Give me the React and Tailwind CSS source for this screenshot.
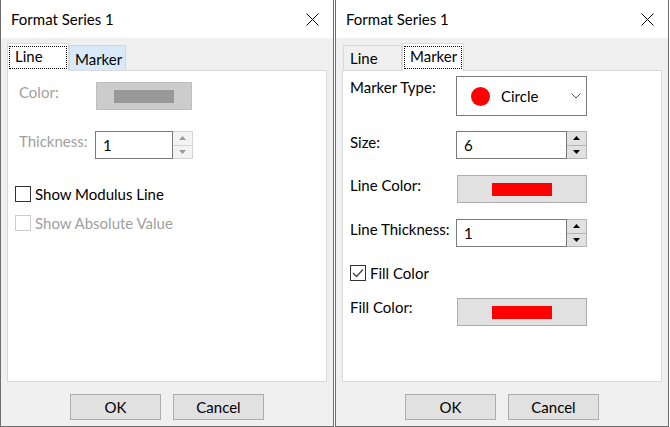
import React from 'react';

function CloseX() {
  return (
    <svg width="13" height="13" viewBox="0 0 13 13" className="block">
      <path d="M0.5 0.5 L12.5 12.5 M12.5 0.5 L0.5 12.5" stroke="#000" strokeWidth="1" fill="none" />
    </svg>
  );
}

function Arrow({ up, color }) {
  return (
    <svg width="7" height="4" viewBox="0 0 7 4" className="block">
      <polygon points={up ? '3.5,0 7,4 0,4' : '0,0 7,0 3.5,4'} fill={color} />
    </svg>
  );
}

function SpinBox({ value, width, dim }) {
  const arrow = dim ? '#9a9a9a' : '#000';
  return (
    <div className="flex h-[28px]" style={{ width }}>
      <div className="flex-1 border border-[#7a7a7a] bg-white pl-[7px] pt-[3px] leading-[20px] text-black">{value}</div>
      <div className={`w-[20px] flex flex-col border border-l-0 ${dim ? 'border-[#d4d4d4] bg-[#f3f3f3]' : 'border-[#b4b4b4] bg-[#e1e1e1]'}`}>
        <div className={`flex-1 flex items-center justify-center border-b ${dim ? 'border-[#d4d4d4]' : 'border-[#b4b4b4]'}`}>
          <Arrow up color={arrow} />
        </div>
        <div className="flex-1 flex items-center justify-center">
          <Arrow color={arrow} />
        </div>
      </div>
    </div>
  );
}

function ColorButton({ swatch, dim, className }) {
  return (
    <div className={`h-[28px] border flex items-center justify-center ${dim ? 'bg-[#cccccc] border-[#bfbfbf]' : 'bg-[#e1e1e1] border-[#adadad]'} ${className}`}>
      <div className="w-[60px] h-[13px]" style={{ background: swatch }} />
    </div>
  );
}

function CheckBox({ checked, dim, label }) {
  return (
    <div className="flex items-start h-[20px]">
      <div className={`mt-[2px] w-[16px] h-[16px] border bg-white flex items-center justify-center ${dim ? 'border-[#cccccc]' : 'border-[#333333]'}`}>
        {checked && (
          <svg width="12" height="10" viewBox="0 0 12 10" className="block">
            <path d="M1 5 L4.5 8.5 L11 1.5" stroke="#404040" strokeWidth="1.3" fill="none" />
          </svg>
        )}
      </div>
      <span className={`ml-[4px] ${dim ? 'text-[#a0a0a0]' : 'text-black'}`}>{label}</span>
    </div>
  );
}

function Tab({ label, selected, width }) {
  if (selected) {
    return (
      <div className="relative z-10 -mb-px h-[28px] bg-white border-x border-t border-[#d9d9d9] pt-[2px] px-[1px] pb-[1px]" style={{ width }}>
        <div className="h-[23px] border border-dotted border-black pl-[5px] leading-[19px] text-black">{label}</div>
      </div>
    );
  }
  return (
    <div className="h-[25px] bg-[#f0f0f0] border-x border-t border-[#d9d9d9] pl-[6px] pt-[2px] leading-[20px] text-black" style={{ width }}>
      {label}
    </div>
  );
}

function Dialog({ tabs, children }) {
  return (
    <div className="w-[334px] h-[427px] flex flex-col border-x border-b border-[#6e6e6e] bg-[#f0f0f0]">
      <div className="h-[38px] bg-white flex items-center justify-between pl-[10px] pr-[14px]">
        <span className="text-[15px] text-black leading-[20px]">Format Series 1</span>
        <CloseX />
      </div>
      <div className="flex flex-col px-[6px]">
        <div className="h-[32px] flex items-end">{tabs}</div>
        <div className="h-[312px] bg-white border border-[#d9d9d9]">{children}</div>
      </div>
      <div className="mt-[12px] flex justify-center gap-[12px]">
        <div className="w-[91px] h-[26px] border border-[#adadad] bg-[#e1e1e1] flex items-center justify-center text-black">OK</div>
        <div className="w-[91px] h-[26px] border border-[#adadad] bg-[#e1e1e1] flex items-center justify-center text-black">Cancel</div>
      </div>
    </div>
  );
}

export default function App() {
  return (
    <div className="w-[670px] h-[427px] bg-white flex gap-px font-['Lato',sans-serif] text-[15px] leading-[20px]">
      <Dialog
        tabs={
          <>
            <Tab label="Line" selected width={62} />
            <div className="h-[25px] w-[57px] bg-[#d8eaf9] border-x border-t border-[#c0dcf3] pl-[5px] pt-[3px] leading-[20px] text-black">Marker</div>
          </>
        }
      >
        <div className="pl-[11px] pt-[11px] flex flex-col">
          <div className="flex items-start">
            <span className="w-[77px] text-[#a0a0a0]">Color:</span>
            <ColorButton swatch="#999999" dim className="w-[96px]" />
          </div>
          <div className="mt-[21px] flex items-start">
            <span className="w-[76px] text-[#a0a0a0]">Thickness:</span>
            <SpinBox value="1" width={98} dim />
          </div>
          <div className="mt-[25px] -ml-[4px] flex flex-col gap-[9px]">
            <CheckBox label="Show Modulus Line" />
            <CheckBox label="Show Absolute Value" dim />
          </div>
        </div>
      </Dialog>
      <Dialog
        tabs={
          <>
            <div className="ml-px" />
            <Tab label="Line" width={59} />
            <Tab label="Marker" selected width={62} />
          </>
        }
      >
        <div className="pl-[7px] pt-[5px] flex flex-col text-black">
          <div className="flex items-start">
            <span className="w-[106px] mt-px">Marker Type:</span>
            <div className="w-[131px] h-[40px] border border-[#7a7a7a] bg-white flex items-center pl-[14px] pr-[5px]">
              <div className="w-[19px] h-[19px] rounded-full bg-[#ff0000]" />
              <span className="ml-[11px]">Circle</span>
              <svg width="10" height="6" viewBox="0 0 10 6" className="ml-auto block">
                <path d="M0.5 0.5 L5 5 L9.5 0.5" stroke="#505050" strokeWidth="1" fill="none" />
              </svg>
            </div>
          </div>
          <div className="mt-[15px] flex items-start">
            <span className="w-[106px] mt-px">Size:</span>
            <SpinBox value="6" width={131} />
          </div>
          <div className="mt-[16px] flex items-start">
            <span className="w-[107px]">Line Color:</span>
            <ColorButton swatch="#ff0000" className="w-[130px]" />
          </div>
          <div className="mt-[16px] flex items-start">
            <span className="w-[106px]">Line Thickness:</span>
            <SpinBox value="1" width={131} />
          </div>
          <div className="mt-[16px]">
            <CheckBox label="Fill Color" checked />
          </div>
          <div className="mt-[15px] flex items-start">
            <span className="w-[107px] -mt-px">Fill Color:</span>
            <ColorButton swatch="#ff0000" className="w-[130px]" />
          </div>
        </div>
      </Dialog>
    </div>
  );
}
